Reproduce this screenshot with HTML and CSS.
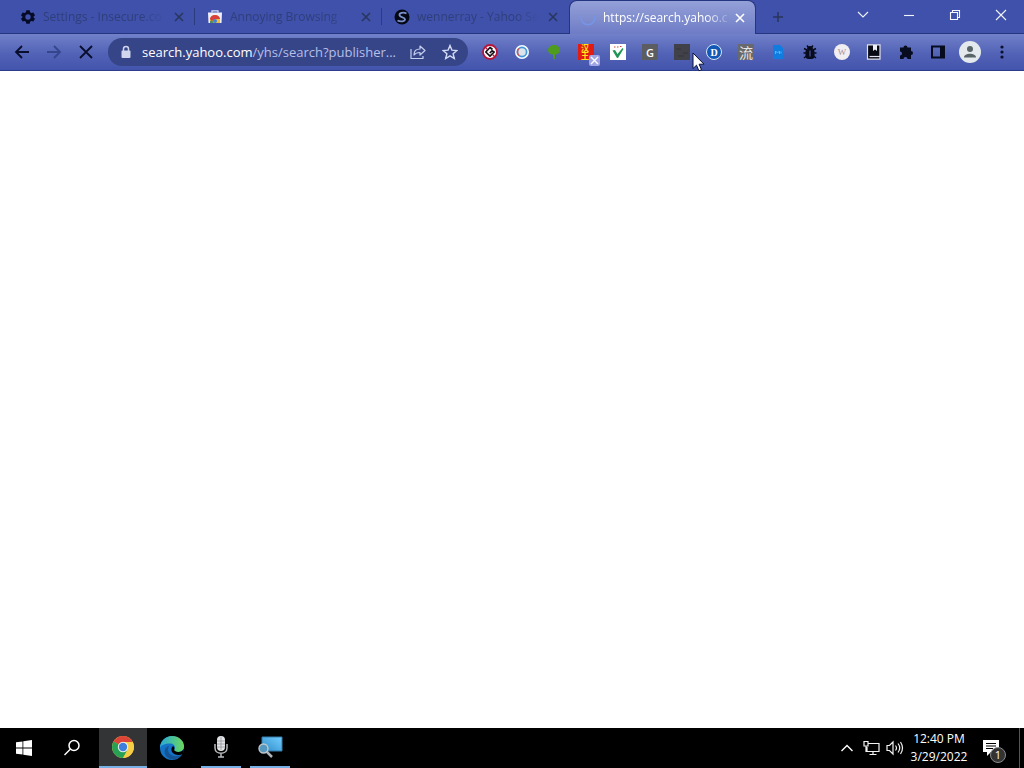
FILE: index.html
```html
<!DOCTYPE html>
<html lang="en">
<head>
<meta charset="utf-8">
<title>Browser</title>
<link rel="stylesheet" href="styles.css">
</head>
<body>
<div class="desktop">
  <header class="tabstrip">
    <nav class="tabs">
      <div class="tab">
        <svg class="favicon" viewBox="0 0 24 24" fill="#050b26"><path fill-rule="evenodd" d="M9.500 2h5l.7 3 1.800 1 3-.9 2.500 4.200-2.300 2.200v1l2.300 2.200-2.500 4.200-3-.9-1.800 1-.7 3h-5l-.7-3-1.800-1-3 .9-2.500-4.200L3.800 12.500v-1L1.500 9.300 4 5.100l3 .9 1.800-1zM12 8a4 4 0 100 8 4 4 0 000-8z"/></svg>
        <span class="tab-title">Settings - Insecure.co</span>
        <button class="tab-close" aria-label="Close tab"><svg viewBox="0 0 10 10"><path d="M1 1l8 8M9 1L1 9"/></svg></button>
      </div>
      <div class="tab">
        <svg class="favicon" viewBox="0 0 16 16"><path d="M5 3.500V1.800h6v1.700" fill="none" stroke="#d8def5" stroke-width="1.300"/><path d="M1 3.500h14L14.500 14h-13z" fill="#edf0f8"/><path d="M3 14v-3a5 5 0 0110 0v3z" fill="#f4bd30"/><path d="M2.800 10a5.400 5.400 0 0110.400 0H8L5 12z" fill="#d9403c"/><circle cx="8" cy="12" r="2" fill="#3c83df"/><path d="M3 12l2-1 1.500 3H3z" fill="#538d63"/></svg>
        <span class="tab-title">Annoying Browsing</span>
        <button class="tab-close" aria-label="Close tab"><svg viewBox="0 0 10 10"><path d="M1 1l8 8M9 1L1 9"/></svg></button>
      </div>
      <div class="tab">
        <svg class="favicon" viewBox="0 0 16 16"><circle cx="8" cy="8" r="7.500" fill="#040815"/><path d="M12.500 4.500C9 2.500 5 4 5.500 6.300S11 8 11 10.300 6.500 13 3.500 11.500" fill="none" stroke="#7c91cb" stroke-width="1.800"/></svg>
        <span class="tab-title">wennerray - Yahoo Se</span>
        <button class="tab-close" aria-label="Close tab"><svg viewBox="0 0 10 10"><path d="M1 1l8 8M9 1L1 9"/></svg></button>
      </div>
      <div class="tab active">
        <svg class="favicon" viewBox="0 0 16 16" fill="none" stroke-width="1.500"><path d="M1.500 6a6.800 6.800 0 1013 0" stroke="#7695e6"/></svg>
        <span class="tab-title">https://search.yahoo.c</span>
        <button class="tab-close" aria-label="Close tab"><svg viewBox="0 0 10 10"><path d="M1 1l8 8M9 1L1 9"/></svg></button>
      </div>
      <button class="new-tab" aria-label="New tab"><svg width="12" height="12" viewBox="0 0 12 12"><path d="M6 1v10M1 6h10" stroke="#29355c" stroke-width="1.500"/></svg></button>
    </nav>
    <div class="captions">
      <button aria-label="Search tabs"><svg width="12" height="12" viewBox="0 0 12 12"><path d="M1 3l5 5 5-5"/></svg></button>
      <button aria-label="Minimize"><svg width="12" height="12" viewBox="0 0 12 12"><path d="M1 6.500h10"/></svg></button>
      <button aria-label="Restore"><svg width="12" height="12" viewBox="0 0 12 12"><path d="M1.500 3.500h7v7h-7zM3.500 3.500v-2h7v7h-2"/></svg></button>
      <button aria-label="Close"><svg width="12" height="12" viewBox="0 0 12 12"><path d="M1 1l10 10M11 1L1 11"/></svg></button>
    </div>
  </header>

  <div class="toolbar">
    <div class="tools">
      <button class="tool" aria-label="Back"><svg width="16" height="16" viewBox="0 0 16 16"><path d="M15 8H2M8 2L2 8l6 6" fill="none" stroke="#080e2c" stroke-width="1.800"/></svg></button>
      <button class="tool" aria-label="Forward"><svg width="16" height="16" viewBox="0 0 16 16"><path d="M1 8h13M8 2l6 6-6 6" fill="none" stroke="#35458e" stroke-width="1.800"/></svg></button>
      <button class="tool" aria-label="Stop loading"><svg width="16" height="16" viewBox="0 0 16 16"><path d="M2 2l12 12M14 2L2 14" stroke="#080e2c" stroke-width="1.800"/></svg></button>
    </div>
    <div class="omnibox">
      <svg class="lock" width="12" height="14" viewBox="0 0 12 14"><path d="M3.500 6V4a2.500 2.500 0 015 0v2" fill="none" stroke="#d0d6ee" stroke-width="1.500"/><rect x="1.500" y="5.500" width="9" height="7.500" rx="1" fill="#d0d6ee"/></svg>
      <div class="url"><span class="host">search.yahoo.com</span>/yhs/search?publisher...</div>
      <button class="tool" aria-label="Share"><svg width="16" height="16" viewBox="0 0 16 16" fill="none" stroke="#c6cef0" stroke-width="1.200" stroke-linejoin="round"><path d="M1 5v9.500h12V12M4 11c0-4 2-6 6-6V2l5 4.500-5 4.500V8.500c-3 0-4.500.5-6 2.500z"/></svg></button>
      <button class="tool" aria-label="Bookmark"><svg width="16" height="16" viewBox="0 0 16 16"><path d="M8 1.500l1.900 4.600 5 .4-3.800 3.200 1.200 4.800L8 11.900l-4.300 2.600 1.200-4.800L1.100 6.500l5-.4z" fill="none" stroke="#d3daf5" stroke-width="1.400"/></svg></button>
    </div>
    <div class="tools">
      <button class="tool" aria-label="Blocker"><svg width="16" height="16" viewBox="0 0 16 16"><circle cx="8" cy="8" r="7" fill="#fff" stroke="#b81639" stroke-width="1.800"/><path d="M10.500 5.500L8 3.500 3.800 8 8 12.200 12.200 8 10 6.800 7.800 9" fill="none" stroke="#181019" stroke-width="1.700" stroke-linejoin="round"/><path d="M3 3l2.500 2.500M10.800 10.800L13 13" stroke="#b81639" stroke-width="1.400"/></svg></button>
      <button class="tool" aria-label="Ring"><svg width="16" height="16" viewBox="0 0 16 16"><circle cx="8" cy="8" r="7" fill="#f7fbff"/><circle cx="8" cy="8" r="4.600" fill="#dfe3ea" stroke="#4099dc" stroke-width="1.700"/><path d="M5 11.500a4.600 4.600 0 010-7" fill="none" stroke="#d5554f" stroke-width="1.500"/></svg></button>
      <button class="tool" aria-label="Tree"><svg width="16" height="16" viewBox="0 0 16 16"><path d="M8 1c3 0 6 2 6 5s-2.500 4.500-5 4.500V15H7.500l-.5-4.500C4 10.500 2 8.500 2 6s3-5 6-5z" fill="#4e9b1d"/></svg></button>
      <button class="tool badged" aria-label="Hanwang, off"><span class="tile hanwang" lang="zh">汉<br>王</span><span class="off-badge"><svg width="11" height="11" viewBox="0 0 11 11"><path d="M2 2l7 7M9 2L2 9" stroke="#fff" stroke-width="1.300"/></svg></span></button>
      <button class="tool" aria-label="Checker"><svg width="16" height="16" viewBox="0 0 16 16"><path d="M0 0h16v16H0z" fill="#fff"/><path d="M2.500 6.500L5 6l2.500 4L12.500 4l1 1L8 14H7z" fill="#219456"/><path d="M4 3h1.500M7 3h1.500M10 2.500h1.500" stroke="#c24c3d"/></svg></button>
      <button class="tool"><span class="tile g">G</span></button>
      <button class="tool" aria-label="Dark square"><svg width="16" height="16" viewBox="0 0 16 16"><path d="M0 0h16v16H0z" fill="#404149"/><path d="M2 5h5M9 9h5M4 12h6" stroke="#3a3b42" stroke-width="2"/></svg></button>
      <button class="tool"><span class="tile d">D</span></button>
      <button class="tool"><span class="tile liu" lang="zh">流</span></button>
      <button class="tool" aria-label="Page"><svg width="16" height="16" viewBox="0 0 16 16"><path d="M3 1h7l3 3v11H3z" fill="#117ce0"/><path d="M5.500 10V7l2 2 2-2v3M11 7.500v2" fill="none" stroke="#55b4ff"/></svg></button>
      <button class="tool" aria-label="Bug"><svg width="16" height="16" viewBox="0 0 16 16"><path d="M2 4.500l3 1.500M14 4.500L11 6M1.500 9h13M2 14l3-2.500M14 14l-3-2.500M5 1.500l1.500 2M11 1.500l-1.500 2" stroke="#080b1c" stroke-width="1.400"/><path d="M5 5c0-4 6-4 6 0z" fill="#080b1c"/><rect x="3.500" y="5" width="9" height="10" rx="3" fill="#080b1c"/><path d="M8 6.500v6" stroke="#5362b0"/></svg></button>
      <button class="tool"><span class="tile w">W</span></button>
      <button class="tool" aria-label="Book"><svg width="16" height="16" viewBox="0 0 16 16"><path d="M1.500.8h12.500v14.400H1.500z" fill="#080a14" stroke="#e1e3ee" stroke-width="1.200"/><path d="M7 1h4v6L9 5.500 7 7z" fill="#eef0f7"/><path d="M3.500 12.500h10.500" stroke="#e1e3ee" stroke-width="1.200"/></svg></button>
      <button class="tool" aria-label="Extensions"><svg width="16" height="16" viewBox="0 0 16 16" fill="#080c20"><path d="M2 3.500h3.500a2 2 0 114 0H13V7a2 2 0 110 4v4H9.500a2 2 0 00-4 0H2v-3.500a2 2 0 000-4z"/></svg></button>
      <button class="tool" aria-label="Side panel"><svg width="16" height="16" viewBox="0 0 16 16"><path d="M2 2.500h12v11H2z" fill="none" stroke="#070b1e" stroke-width="2"/><path d="M10 2h4v12h-4z" fill="#070b1e"/></svg></button>
      <button class="tool" aria-label="Profile"><svg width="22" height="22" viewBox="0 0 22 22"><circle cx="11" cy="11" r="11" fill="#e3e9ec"/><circle cx="11" cy="8" r="3" fill="#586468"/><path d="M5 16.500c0-5 12-5 12 0z" fill="#586468"/></svg></button>
      <button class="tool" aria-label="Menu"><svg width="16" height="16" viewBox="0 0 16 16" fill="#0a1030"><circle cx="8" cy="3" r="1.600"/><circle cx="8" cy="8" r="1.600"/><circle cx="8" cy="13" r="1.600"/></svg></button>
    </div>
  </div>

  <main class="page"></main>

  <footer class="taskbar">
    <div class="launch">
      <button class="task" aria-label="Start"><svg width="16" height="16" viewBox="0 0 16 16" fill="#fff"><path d="M0 2.300l6.500-.9v6.100H0zM7.300 1.300L16 0v7.500H7.300zM0 8.400h6.500v6.200L0 13.700zM7.300 8.400H16V16l-8.700-1.200z"/></svg></button>
      <button class="task" aria-label="Search"><svg width="18" height="18" viewBox="0 0 18 18" fill="none" stroke="#fff" stroke-width="1.500"><circle cx="11" cy="6.500" r="5"/><path d="M7.500 10L1.500 16"/></svg></button>
    </div>
    <div class="apps">
      <button class="task current" aria-label="Chrome"><svg width="22" height="22" viewBox="0 0 22 22"><circle cx="11" cy="11" r="11" fill="#f6cd45"/><path d="M11 11L1.500 5.500a11 11 0 0119 0z" fill="#dc4437"/><path d="M1.500 5.500A11 11 0 0011 22l4.800-8.500L11 11z" fill="#27a153"/><path d="M11 6h9.700A11 11 0 0111 22l4.500-8z" fill="#f6cd45"/><circle cx="11" cy="11" r="5.200" fill="#eef1f5"/><circle cx="11" cy="11" r="4.200" fill="#3e7fdd"/></svg></button>
      <button class="task" aria-label="Edge"><svg width="24" height="24" viewBox="0 0 24 24"><defs><linearGradient id="eg" x1="0" y1="0" x2="1" y2="0"><stop offset="0" stop-color="#27a8d9"/><stop offset="1" stop-color="#6bd85b"/></linearGradient></defs><circle cx="12" cy="12" r="12" fill="#1573c7"/><path d="M0 12C0 5 5.500 0 12 0c7 0 12 5 12 10 0 4-3 6-6.500 6-3 0-4-1.500-3-3 1.500-3-1-5.500-4.500-5.500C5 7.500 1 9 0 12z" fill="url(#eg)"/><path d="M9 10c-3 6 2 11 8 10 2 0 4-1 5-2-3 6-11 7-15 3S4 11 9 10z" fill="#145394"/><path d="M13 10c3 2 0 4 2 5 3 2 7 1 9-2l-1 5c-4 2-9 1-11-2-1-2-1-4 1-6z" fill="#000"/></svg></button>
      <button class="task open" aria-label="Voice recorder"><svg width="14" height="24" viewBox="0 0 14 24"><rect x="3" y="1" width="8" height="15" rx="4" fill="#e4e4e6"/><path d="M1 9v4c0 7 12 7 12 0V9M7 18v4M4 22h6" fill="none" stroke="#b9babd" stroke-width="1.500"/><path d="M3 6h8M3 9h8M3 12h8M7 2v13" stroke="#8b8c90" stroke-width=".7"/></svg></button>
      <button class="task open" aria-label="Screen magnifier"><svg width="26" height="24" viewBox="0 0 26 24"><defs><linearGradient id="sg" x1="0" y1="1" x2="1" y2="0"><stop offset="0" stop-color="#2f8bc8"/><stop offset="1" stop-color="#72ceff"/></linearGradient></defs><path d="M5 2h20v14H5z" fill="url(#sg)" stroke="#347cab"/><path d="M9 16l6 6" stroke="#adb4ba" stroke-width="2.500"/><circle cx="6.500" cy="13.500" r="4.500" fill="#5698bd" stroke="#bcc7cf" stroke-width="1.400"/></svg></button>
    </div>
    <div class="tray">
      <button class="tray-icon" aria-label="Show hidden icons"><svg width="14" height="14" viewBox="0 0 14 14"><path d="M1.500 10L7 4.500l5.500 5.500" fill="none" stroke="#fff" stroke-width="1.400"/></svg></button>
      <button class="tray-icon" aria-label="Network"><svg width="17" height="16" viewBox="0 0 17 16" fill="none" stroke="#f2f2f2" stroke-width="1.200"><path d="M5 3.500h11v8H4V7M10 11.500v3M6.500 14.500h7M1 1.500h4V6H1zM3 6v6"/></svg></button>
      <button class="tray-icon" aria-label="Volume"><svg width="18" height="16" viewBox="0 0 18 16" fill="none" stroke="#f2f2f2" stroke-width="1.200"><path d="M1 5.500h2.500L7 2v12l-3.500-3.500H1zM9.500 5.500q2 2.500 0 5M12 3.500q3.500 4.500 0 9M14.500 2q4 6 0 12"/></svg></button>
      <button class="clock"><span>12:40 PM</span><span>3/29/2022</span></button>
      <button class="notify" aria-label="1 notification"><svg width="17" height="17" viewBox="0 0 17 17"><path d="M0 0h16v12H8l-4 4v-4H0z" fill="#fff"/><path d="M3 3.500h10M3 6h10M3 8.500h7" stroke="#000"/></svg><span class="count">1</span></button>
      <div class="show-desktop"></div>
    </div>
  </footer>

  <svg class="cursor" width="13" height="20" viewBox="0 0 13 20"><path d="M1 1v15.500l3.500-3.300 2.400 5.600 2.600-1.100-2.400-5.500H12z" fill="#fff" stroke="#0a1236"/></svg>
</div>
</body>
</html>
```
FILE: styles.css
```css
* { box-sizing: border-box; }
body {
  margin: 0;
  font-family: "Open Sans", "Noto Sans", "Noto Sans CJK SC", sans-serif;
  font-size: 12px;
}
button {
  display: flex;
  align-items: center;
  justify-content: center;
  flex: none;
  padding: 0;
  border: 0;
  background: none;
  color: inherit;
  font: inherit;
}
svg { display: block; flex: none; }
.desktop {
  position: relative;
  display: flex;
  flex-direction: column;
  min-height: 100vh;
}

.tabstrip {
  display: flex;
  justify-content: space-between;
  height: 34px;
  padding-left: 8px;
  background: #3f51aa;
  border-bottom: 1px solid #26357f;
}
.tabs { display: flex; flex: 0 1 792px; min-width: 0; }
.tab {
  display: flex;
  align-items: center;
  flex: 0 1 187px;
  min-width: 0;
  margin: 8px 0;
  padding: 0 9px 0 12px;
  border-right: 1px solid #2c3b7d;
  color: #303f7c;
}
.tab:nth-child(3) { border-right-color: transparent; }
.favicon { width: 16px; height: 16px; }
.tab-title {
  flex: 1;
  min-width: 0;
  margin: 0 8px 0 7px;
  overflow: hidden;
  white-space: nowrap;
  mask-image: linear-gradient(to right, #000 80%, transparent);
}
.tab-close { width: 12px; height: 16px; }
.tab-close svg { width: 10px; height: 10px; stroke: #29365e; stroke-width: 1.6; }
.tab.active {
  margin: 0 0 -1px;
  padding-left: 10px;
  border: 1px solid #26357f;
  border-bottom: 0;
  border-radius: 8px 8px 0 0;
  background: linear-gradient(#94a0d8, #6e7cc6);
  color: #fff;
}
.active .tab-title { margin-right: 2px; }
.tab.active .tab-close svg { stroke: #fff; }
.new-tab { width: 43px; }
.captions { display: flex; height: 29px; }
.captions button { width: 46px; }
.captions path { fill: none; stroke: #f2f5ff; stroke-width: 1.1; }

.toolbar {
  display: flex;
  align-items: center;
  gap: 6px;
  height: 37px;
  padding: 0 6px;
  background: linear-gradient(#7180c9, #5262b6 55%, #4254ac);
  border-bottom: 1px solid #2d3d8c;
}
.tools { display: flex; flex: none; }
.tool { width: 32px; height: 28px; }
.omnibox {
  display: flex;
  align-items: center;
  flex: 1;
  min-width: 0;
  height: 28px;
  padding: 0 2px 0 12px;
  border-radius: 14px;
  background: #364587;
}
.url {
  flex: 1;
  min-width: 0;
  margin-left: 10px;
  overflow: hidden;
  color: #b5bfe8;
  font-size: 13px;
  line-height: 20px;
  white-space: nowrap;
}
.host { color: #fff; }
.tile {
  display: flex;
  align-items: center;
  justify-content: center;
  width: 16px;
  height: 16px;
}
.hanwang {
  display: block;
  padding-right: 2px;
  background: #e21c12;
  color: #ffe61c;
  font-family: "Noto Sans CJK SC", sans-serif;
  font-size: 8px;
  font-weight: 700;
  line-height: 8px;
}
.badged { position: relative; }
.off-badge {
  position: absolute;
  right: 2px;
  bottom: 0;
  border-radius: 2px;
  background: #a2a5e4;
}
.g { background: #5c5d61; color: #fff; font-size: 11px; font-weight: 600; }
.d {
  border: 1px solid #d7e7fb;
  border-radius: 50%;
  background: #1258b5;
  color: #fff;
  font-family: "Liberation Serif", serif;
  font-size: 10px;
  font-weight: 700;
}
.liu { background: #68696d; color: #e8e8e8; font-family: "Noto Sans CJK SC", sans-serif; font-size: 14px; line-height: 16px; }
.w {
  border-radius: 50%;
  background: #f1eef2;
  color: #a98f9a;
  font-family: "Liberation Serif", serif;
  font-size: 9px;
}

.page { flex: 1; background: #fff; }

.taskbar { display: flex; height: 40px; background: #000; color: #fff; }
.launch, .apps, .tray { display: flex; }
.apps { gap: 1px; margin-left: 3px; }
.task { width: 48px; height: 40px; }
.task.current { background: #333436; border-bottom: 2px solid #76b0e4; }
.task.open { width: 40px; margin: 0 4px; border-bottom: 2px solid #76b0e4; }
.tray { margin-left: auto; }
.tray-icon { width: 24px; }
.clock { flex-direction: column; width: 64px; line-height: 18px; }
.notify { position: relative; justify-content: flex-start; width: 48px; padding-left: 12px; }
.count {
  position: absolute;
  right: 13px;
  bottom: 5px;
  width: 16px;
  height: 16px;
  border: 1px solid #8b8b8b;
  border-radius: 50%;
  background: #333;
  font-size: 11px;
  line-height: 14px;
  text-align: center;
}
.show-desktop { width: 5px; border-left: 1px solid #555; }

.cursor { position: absolute; left: 692px; top: 52px; }
```
